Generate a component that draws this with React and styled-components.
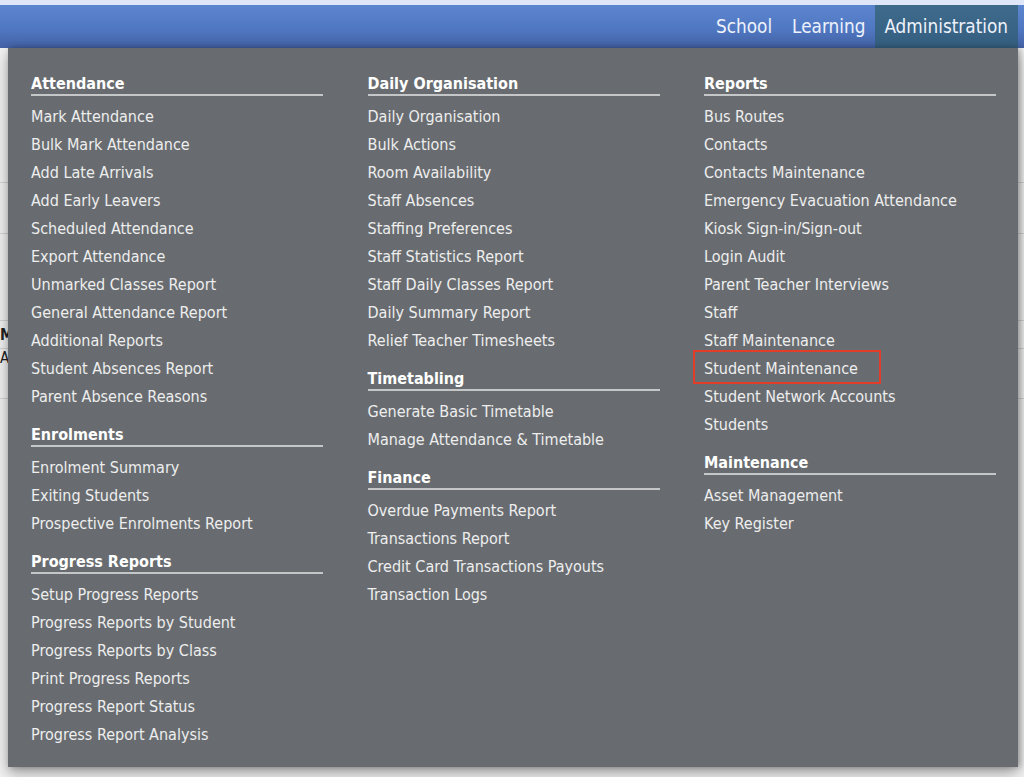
import React from 'react';
import styled, { createGlobalStyle } from 'styled-components';

const GlobalStyle = createGlobalStyle`
  body {
    margin: 0;
    background: #f2f2f2;
    font-family: "DejaVu Sans Condensed", "DejaVu Sans", sans-serif;
  }
`;

const Page = styled.div`
  position: relative;
  width: 1024px;
  height: 777px;
  overflow: hidden;
  background: #f2f2f2;
`;

const TopStrip = styled.div`
  height: 5px;
  background: #dfe6f7;
`;

const NavBar = styled.div`
  height: 43px;
  display: flex;
  justify-content: flex-end;
  padding-right: 6px;
  background: linear-gradient(180deg, #5c85d0 0%, #5078c2 55%, #4462a6 100%);
`;

const NavItem = styled.div`
  padding: 1px 10px 0 ${p => (p.active ? '9px' : '10px')};
  line-height: 42px;
  font-size: 18.8px;
  font-stretch: condensed;
  color: #eef2fb;
  background: ${p => (p.active ? 'linear-gradient(180deg, #3e6a8c 0%, #355f80 100%)' : 'transparent')};
`;

const Backdrop = styled.div`
  padding-top: 133px;
`;

const BackRow = styled.div`
  height: ${p => p.h}px;
  border-bottom: 1px solid #d4d4d4;
  font-size: 15px;
  font-weight: ${p => (p.bold ? 700 : 400)};
  color: #222;
  display: flex;
  align-items: ${p => p.align || 'center'};
`;

const Dropdown = styled.div`
  position: absolute;
  top: 48px;
  left: 8px;
  width: 1010px;
  height: 719px;
  box-sizing: border-box;
  padding: 26px 22px 20px 23px;
  background: #686c70;
  box-shadow: 0 6px 14px rgba(0, 0, 0, 0.35), 2px 0 6px rgba(0, 0, 0, 0.25);
  display: grid;
  grid-template-columns: repeat(3, 292px);
  column-gap: 44.5px;
  align-items: start;
`;

const Column = styled.div`
  display: flex;
  flex-direction: column;
  gap: 14px;
`;

const Section = styled.div``;

const Heading = styled.div`
  font-size: 16px;
  font-weight: 700;
  font-stretch: condensed;
  line-height: 20px;
  color: #ffffff;
  border-bottom: 2px solid #c4c6c8;
  margin-bottom: 7px;
`;

const Item = styled.div`
  position: relative;
  font-size: 16px;
  font-stretch: condensed;
  line-height: 28px;
  color: #eeeeee;
  white-space: nowrap;

  ${p => p.highlight && `
    &::after {
      content: '';
      position: absolute;
      left: -11px;
      top: -5px;
      width: 184px;
      height: 30px;
      border: 2px solid #e23d28;
    }
  `}
`;

const menu = [
  [
    { title: 'Attendance', items: ['Mark Attendance', 'Bulk Mark Attendance', 'Add Late Arrivals', 'Add Early Leavers', 'Scheduled Attendance', 'Export Attendance', 'Unmarked Classes Report', 'General Attendance Report', 'Additional Reports', 'Student Absences Report', 'Parent Absence Reasons'] },
    { title: 'Enrolments', items: ['Enrolment Summary', 'Exiting Students', 'Prospective Enrolments Report'] },
    { title: 'Progress Reports', items: ['Setup Progress Reports', 'Progress Reports by Student', 'Progress Reports by Class', 'Print Progress Reports', 'Progress Report Status', 'Progress Report Analysis'] },
  ],
  [
    { title: 'Daily Organisation', items: ['Daily Organisation', 'Bulk Actions', 'Room Availability', 'Staff Absences', 'Staffing Preferences', 'Staff Statistics Report', 'Staff Daily Classes Report', 'Daily Summary Report', 'Relief Teacher Timesheets'] },
    { title: 'Timetabling', items: ['Generate Basic Timetable', 'Manage Attendance & Timetable'] },
    { title: 'Finance', items: ['Overdue Payments Report', 'Transactions Report', 'Credit Card Transactions Payouts', 'Transaction Logs'] },
  ],
  [
    { title: 'Reports', items: ['Bus Routes', 'Contacts', 'Contacts Maintenance', 'Emergency Evacuation Attendance', 'Kiosk Sign-in/Sign-out', 'Login Audit', 'Parent Teacher Interviews', 'Staff', 'Staff Maintenance', 'Student Maintenance', 'Student Network Accounts', 'Students'] },
    { title: 'Maintenance', items: ['Asset Management', 'Key Register'] },
  ],
];

function App() {
  return (
    <Page>
      <GlobalStyle />
      <TopStrip />
      <NavBar>
        <NavItem>School</NavItem>
        <NavItem>Learning</NavItem>
        <NavItem active>Administration</NavItem>
      </NavBar>

      <Backdrop>
        <BackRow h={1} />
        <BackRow h={50} />
        <BackRow h={86} />
        <BackRow h={27} bold>Mon</BackRow>
        <BackRow h={49} align="flex-start">All</BackRow>
      </Backdrop>

      <Dropdown>
        {menu.map((col, ci) => (
          <Column key={ci}>
            {col.map(sec => (
              <Section key={sec.title}>
                <Heading>{sec.title}</Heading>
                {sec.items.map(it => (
                  <Item key={it} highlight={it === 'Student Maintenance'}>{it}</Item>
                ))}
              </Section>
            ))}
          </Column>
        ))}
      </Dropdown>
    </Page>
  );
}

export default App;
